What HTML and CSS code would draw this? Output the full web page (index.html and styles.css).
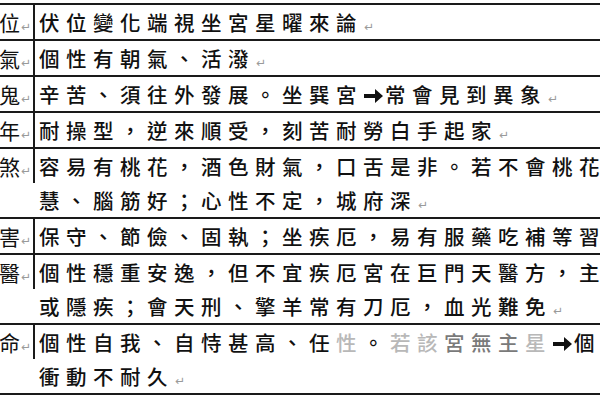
FILE: index.html
```html
<!DOCTYPE html>
<html lang="zh-Hant">
<head>
<meta charset="utf-8">
<link rel="stylesheet" href="styles.css">
</head>
<body>
<div class="page">
  <div class="table">
    <div class="row">
      <div class="label"><span>伏位<i class="rm">↵</i></span></div>
      <div class="desc">伏位變化端視坐宮星曜來論<i class="rm">↵</i></div>
    </div>
    <div class="row">
      <div class="label"><span>生氣<i class="rm">↵</i></span></div>
      <div class="desc">個性有朝氣、活潑<i class="rm">↵</i></div>
    </div>
    <div class="row">
      <div class="label"><span>五鬼<i class="rm">↵</i></span></div>
      <div class="desc">辛苦、須往外發展。坐巽宮<svg class="arrow" viewBox="0 0 20 20" width="20" height="20"><path d="M1 8h11V3l8 7-8 7v-5H1z" fill="#111"/></svg>常會見到異象<i class="rm">↵</i></div>
    </div>
    <div class="row">
      <div class="label"><span>延年<i class="rm">↵</i></span></div>
      <div class="desc">耐操型，逆來順受，刻苦耐勞白手起家<i class="rm">↵</i></div>
    </div>
    <div class="row">
      <div class="label"><span>六煞<i class="rm">↵</i></span></div>
      <div class="desc">容易有桃花，酒色財氣，口舌是非。若不會桃花，<br>慧、腦筋好；心性不定，城府深<i class="rm">↵</i></div>
    </div>
    <div class="row">
      <div class="label"><span>禍害<i class="rm">↵</i></span></div>
      <div class="desc">保守、節儉、固執；坐疾厄，易有服藥吃補等習慣</div>
    </div>
    <div class="row">
      <div class="label"><span>天醫<i class="rm">↵</i></span></div>
      <div class="desc">個性穩重安逸，但不宜疾厄宮在巨門天醫方，主慢<br>或隱疾；會天刑、擎羊常有刀厄，血光難免<i class="rm">↵</i></div>
    </div>
    <div class="row last">
      <div class="label"><span>絕命<i class="rm">↵</i></span></div>
      <div class="desc">個性自我、自恃甚高、任<span class="wm">性</span>。<span class="wm">若該</span><span class="wm2">宮無主</span><span class="wm">星</span><svg class="arrow" viewBox="0 0 20 20" width="20" height="20"><path d="M1 8h11V3l8 7-8 7v-5H1z" fill="#111"/></svg>個<br>衝動不耐久<i class="rm">↵</i></div>
    </div>
  </div>
</div>
</body>
</html>
```
FILE: styles.css
```css
html, body {
  margin: 0;
  padding: 0;
  background: #fff;
}
.page {
  width: 600px;
  height: 400px;
  overflow: hidden;
  padding-top: 3px;
  box-sizing: border-box;
  font-family: "Noto Sans CJK TC", "Noto Sans CJK SC", sans-serif;
  color: #111;
}
.table {
  width: 760px;
  border-top: 2px solid #1a1a1a;
}
.row {
  display: grid;
  grid-template-columns: 35px 1fr;
  border-bottom: 2px solid #1a1a1a;
}
.label {
  border-right: 2px solid #1a1a1a;
  display: flex;
  justify-content: flex-end;
  overflow: hidden;
  font-size: 21px;
  line-height: 34px;
  height: 34px;
  white-space: nowrap;
}
.label span {
  flex-shrink: 0;
  padding-right: 2px;
}
.desc {
  padding-left: 4px;
  font-size: 20.5px;
  font-weight: 500;
  line-height: 34px;
  letter-spacing: 6.5px;
  white-space: nowrap;
}
.rm {
  font-style: normal;
  font-weight: 400;
  font-family: "DejaVu Sans", sans-serif;
  font-size: 12px;
  line-height: 0;
  color: #9a9a9a;
  letter-spacing: 0;
  margin-left: 1px;
}
.arrow {
  vertical-align: -3px;
  margin-right: 2px;
}
.wm {
  color: #b8b8b8;
}
.wm2 {
  color: #7a7a7a;
}
```
